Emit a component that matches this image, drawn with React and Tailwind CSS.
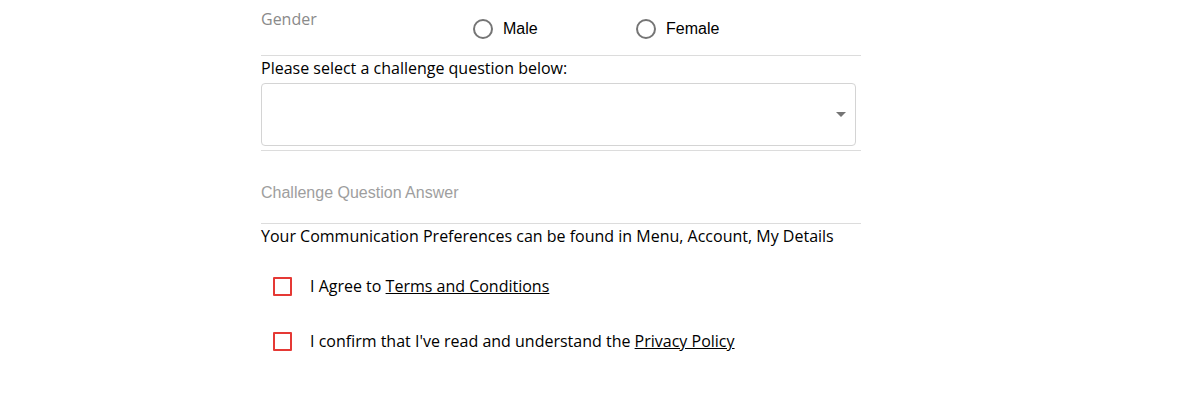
import React from "react";

const open = { fontFamily: '"Open Sans", "Liberation Sans", sans-serif' };
const arial = { fontFamily: '"Liberation Sans", Arial, sans-serif' };

function Radio({ label }) {
  return (
    <label className="flex items-center cursor-pointer h-[20px]">
      <span className="w-[20px] h-[20px] rounded-full border-2 border-[#757575] bg-white" />
      <span className="ml-[10px] text-[16px] leading-[20px] text-black" style={arial}>{label}</span>
    </label>
  );
}

function Check({ children }) {
  return (
    <div className="flex items-center h-[22px] pl-[12px]">
      <span className="w-[19px] h-[19px] border-2 border-[#e53935] rounded-[1px] bg-white shrink-0" />
      <span className="ml-[18px] text-[16px] text-black leading-[22px]" style={open}>{children}</span>
    </div>
  );
}

export default function App() {
  return (
    <div className="w-[1200px] h-[400px] bg-white">
      <div className="ml-[261px] w-[600px]">
        <div className="h-[56px] border-b border-[#dcdcdc] flex items-start">
          <div className="w-[212px] pt-[8px] text-[16px] leading-[22px] text-[#8a8a8a]" style={open}>Gender</div>
          <div className="flex items-start pt-[19px]">
            <div className="w-[163px]"><Radio label="Male" /></div>
            <Radio label="Female" />
          </div>
        </div>
        <div className="border-b border-[#dcdcdc] pb-[4px]">
          <div className="pt-[1px] text-[16px] leading-[22px] text-black" style={open}>Please select a challenge question below:</div>
          <div className="mt-[4px] w-[595px] h-[63px] border border-[#d4d4d4] rounded-[4px] flex items-center justify-end pr-[9px]">
            <svg width="10" height="6" viewBox="0 0 10 6"><path d="M0 0 L10 0 L5 5 Z" fill="#757575" /></svg>
          </div>
        </div>
        <div className="h-[73px] border-b border-[#dcdcdc] pt-[33px]">
          <div className="text-[16px] leading-[18px] text-[#9e9e9e]" style={arial}>Challenge Question Answer</div>
        </div>
        <div className="pt-[1px] text-[16px] leading-[22px] text-black whitespace-nowrap" style={open}>
          Your Communication Preferences can be found in Menu, Account, My Details
        </div>
        <div className="mt-[28px]">
          <Check>I Agree to <span className="underline">Terms and Conditions</span></Check>
        </div>
        <div className="mt-[33px]">
          <Check>I confirm that I've read and understand the <span className="underline">Privacy Policy</span></Check>
        </div>
      </div>
    </div>
  );
}
